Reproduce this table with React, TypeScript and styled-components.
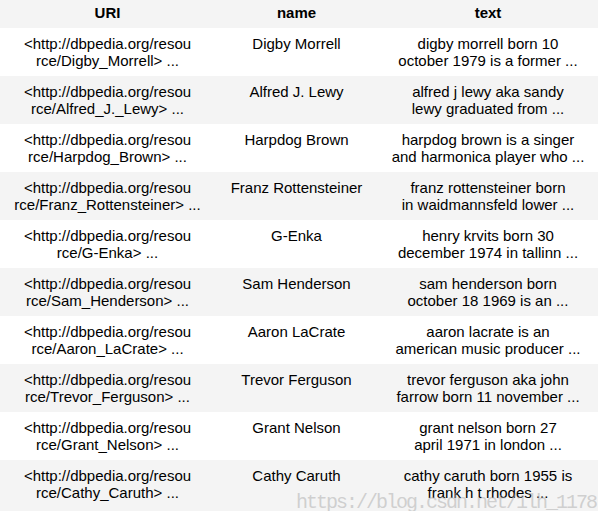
import React from "react";
import styled, { createGlobalStyle } from "styled-components";

const Global = createGlobalStyle`
  html, body { margin: 0; padding: 0; background: #ffffff; }
  body { font-family: "Liberation Sans", Arial, sans-serif; }
`;

const Page = styled.div`
  position: relative;
  width: 605px;
  height: 511px;
  overflow: hidden;
  background: #ffffff;
`;

const Table = styled.table`
  width: 598px;
  border-collapse: collapse;
  border-spacing: 0;
  table-layout: fixed;
  font-family: "Liberation Sans", Arial, sans-serif;
  font-size: 15px;
  line-height: 17px;
  color: #000000;
`;

const HeadRow = styled.tr`
  height: 28px;
  background: #f4f4f4;
`;

const HeadCell = styled.th<{ $w: number }>`
  width: ${(p) => p.$w}px;
  padding: 4px 0 0 0;
  vertical-align: top;
  text-align: center;
  font-weight: bold;
`;

const Row = styled.tr<{ $shade: boolean }>`
  height: 48px;
  background: ${(p) => (p.$shade ? "#f4f4f4" : "#ffffff")};
  &:last-child {
    height: 51px;
  }
`;

const Cell = styled.td`
  padding: 7px 0 0 0;
  vertical-align: top;
  text-align: center;
  white-space: nowrap;
`;

const Line = styled.span`
  display: block;
`;

const Watermark = styled.div`
  position: absolute;
  left: 296px;
  top: 492px;
  font-family: "Liberation Mono", "DejaVu Sans Mono", monospace;
  font-size: 20px;
  letter-spacing: -2px;
  line-height: 22px;
  color: rgba(170, 170, 170, 0.5);
  white-space: nowrap;
  pointer-events: none;
`;

type Item = { uri: string; name: string; text: [string, string] };

const rows: Item[] = [
  { uri: "rce/Digby_Morrell> ...", name: "Digby Morrell", text: ["digby morrell born 10", "october 1979 is a former ..."] },
  { uri: "rce/Alfred_J._Lewy> ...", name: "Alfred J. Lewy", text: ["alfred j lewy aka sandy", "lewy graduated from ..."] },
  { uri: "rce/Harpdog_Brown> ...", name: "Harpdog Brown", text: ["harpdog brown is a singer", "and harmonica player who ..."] },
  { uri: "rce/Franz_Rottensteiner> ...", name: "Franz Rottensteiner", text: ["franz rottensteiner born", "in waidmannsfeld lower ..."] },
  { uri: "rce/G-Enka> ...", name: "G-Enka", text: ["henry krvits born 30", "december 1974 in tallinn ..."] },
  { uri: "rce/Sam_Henderson> ...", name: "Sam Henderson", text: ["sam henderson born", "october 18 1969 is an ..."] },
  { uri: "rce/Aaron_LaCrate> ...", name: "Aaron LaCrate", text: ["aaron lacrate is an", "american music producer ..."] },
  { uri: "rce/Trevor_Ferguson> ...", name: "Trevor Ferguson", text: ["trevor ferguson aka john", "farrow born 11 november ..."] },
  { uri: "rce/Grant_Nelson> ...", name: "Grant Nelson", text: ["grant nelson born 27", "april 1971 in london ..."] },
  { uri: "rce/Cathy_Caruth> ...", name: "Cathy Caruth", text: ["cathy caruth born 1955 is", "frank h t rhodes ..."] },
];

export default function App() {
  return (
    <Page>
      <Global />
      <Table>
        <thead>
          <HeadRow>
            <HeadCell $w={215}>URI</HeadCell>
            <HeadCell $w={163}>name</HeadCell>
            <HeadCell $w={220}>text</HeadCell>
          </HeadRow>
        </thead>
        <tbody>
          {rows.map((r, i) => (
            <Row key={r.name} $shade={i % 2 === 1}>
              <Cell>
                <Line>{"<http://dbpedia.org/resou"}</Line>
                <Line>{r.uri}</Line>
              </Cell>
              <Cell>
                <Line>{r.name}</Line>
              </Cell>
              <Cell>
                <Line>{r.text[0]}</Line>
                <Line>{r.text[1]}</Line>
              </Cell>
            </Row>
          ))}
        </tbody>
      </Table>
      <Watermark>https://blog.csdn.net/1lh_1178</Watermark>
    </Page>
  );
}
